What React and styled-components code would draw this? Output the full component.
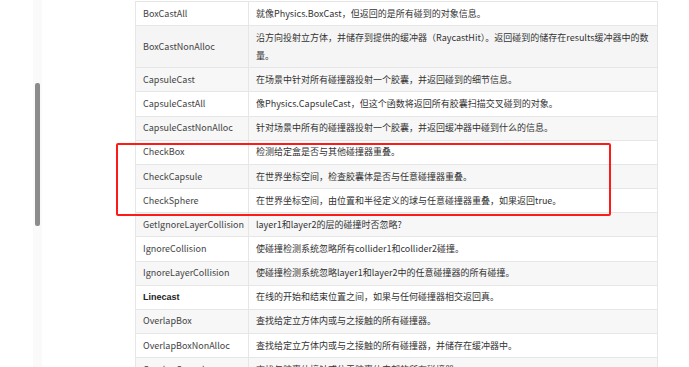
import styled, { createGlobalStyle } from "styled-components";

const GlobalStyle = createGlobalStyle`
  html, body {
    margin: 0;
    padding: 0;
    background: #ffffff;
  }
  body {
    font-family: "Noto Sans CJK SC", sans-serif;
  }
`;

const rows = [
  { name: "BoxCastAll", desc: "就像Physics.BoxCast，但返回的是所有碰到的对象信息。", shade: "#ffffff" },
  {
    name: "BoxCastNonAlloc",
    desc: (
      <>
        沿方向投射立方体，并储存到提供的缓冲器（RaycastHit）。返回碰到的储存在results缓冲器中的数
        <br />
        量。
      </>
    ),
    shade: "#f5f5f5",
  },
  { name: "CapsuleCast", desc: "在场景中针对所有碰撞器投射一个胶囊，并返回碰到的细节信息。", shade: "#f7f7f7" },
  { name: "CapsuleCastAll", desc: "像Physics.CapsuleCast，但这个函数将返回所有胶囊扫描交叉碰到的对象。", shade: "#ffffff" },
  { name: "CapsuleCastNonAlloc", desc: "针对场景中所有的碰撞器投射一个胶囊，并返回缓冲器中碰到什么的信息。", shade: "#f7f7f7" },
  { name: "CheckBox", desc: "检测给定盒是否与其他碰撞器重叠。", shade: "#ffffff" },
  { name: "CheckCapsule", desc: "在世界坐标空间，检查胶囊体是否与任意碰撞器重叠。", shade: "#f7f7f7" },
  { name: "CheckSphere", desc: "在世界坐标空间，由位置和半径定义的球与任意碰撞器重叠，如果返回true。", shade: "#ffffff" },
  { name: "GetIgnoreLayerCollision", desc: "layer1和layer2的层的碰撞时否忽略?", shade: "#f7f7f7" },
  { name: "IgnoreCollision", desc: "使碰撞检测系统忽略所有collider1和collider2碰撞。", shade: "#ffffff" },
  { name: "IgnoreLayerCollision", desc: "使碰撞检测系统忽略layer1和layer2中的任意碰撞器的所有碰撞。", shade: "#f7f7f7" },
  { name: "Linecast", desc: "在线的开始和结束位置之间，如果与任何碰撞器相交返回真。", shade: "#ffffff", bold: true },
  { name: "OverlapBox", desc: "查找给定立方体内或与之接触的所有碰撞器。", shade: "#f7f7f7" },
  { name: "OverlapBoxNonAlloc", desc: "查找给定立方体内或与之接触的所有碰撞器，并储存在缓冲器中。", shade: "#ffffff" },
  { name: "OverlapCapsule", desc: "查找与胶囊体接触或位于胶囊体内部的所有碰撞器。", shade: "#f7f7f7" },
];

export default function App() {
  return (
    <>
      <GlobalStyle />
      <Page>
        <Track>
          <Thumb />
        </Track>
        <Content>
          <Highlight />
          <Table>
            <colgroup>
              <col style={{ width: 113 }} />
              <col style={{ width: 409 }} />
            </colgroup>
            <tbody>
              {rows.map((r) => (
                <Row key={r.name} $shade={r.shade}>
                  <NameCell>{r.bold ? <Strong>{r.name}</Strong> : r.name}</NameCell>
                  <DescCell>{r.desc}</DescCell>
                </Row>
              ))}
            </tbody>
          </Table>
        </Content>
      </Page>
    </>
  );
}

const Page = styled.div`
  display: flex;
  height: 367px;
  overflow: hidden;
  background: #ffffff;
`;

const Track = styled.div`
  flex: none;
  width: 9px;
  margin-left: 33px;
  background: #fafafa;
  display: flex;
  justify-content: center;
`;

const Thumb = styled.div`
  width: 5px;
  height: 143px;
  margin-top: 83px;
  border-radius: 2px;
  background: #8c8c8c;
`;

const Content = styled.div`
  position: relative;
  margin-left: 93px;
  padding-top: 1px;
`;

const Highlight = styled.div`
  position: absolute;
  left: -19px;
  top: 143px;
  width: 495px;
  height: 73px;
  border: 2px solid #ff1a1a;
  border-radius: 2px;
  box-sizing: border-box;
  z-index: 2;
  pointer-events: none;
`;

const Table = styled.table`
  border-collapse: collapse;
  table-layout: fixed;
  width: 523px;
  font-size: 9px;
  line-height: 18px;
  color: #333333;
`;

const Row = styled.tr`
  background: ${(p) => p.$shade};
`;

const Cell = styled.td`
  border: 1px solid #e6e6e6;
  padding: 2.58px 7px;
  vertical-align: middle;
  white-space: nowrap;
`;

const NameCell = styled(Cell)`
  color: #444444;
`;

const DescCell = styled(Cell)`
  color: #333333;
`;

const Strong = styled.strong`
  font-family: "Liberation Sans", Arial, sans-serif;
  font-size: 9px;
  font-weight: 700;
  color: #222222;
`;
